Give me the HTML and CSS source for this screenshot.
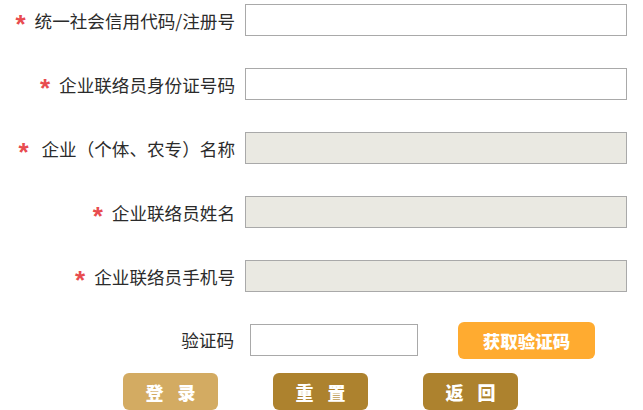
FILE: index.html
```html
<!DOCTYPE html>
<html lang="zh-CN">
<head>
<meta charset="utf-8">
<title>企业登录</title>
<link rel="stylesheet" href="styles.css">
</head>
<body>
<form class="form">
  <div class="row">
    <label class="label"><span class="star">*</span>统一社会信用代码/注册号</label>
    <input class="field" type="text">
  </div>
  <div class="row">
    <label class="label"><span class="star">*</span>企业联络员身份证号码</label>
    <input class="field" type="text">
  </div>
  <div class="row">
    <label class="label"><span class="star">*</span>&nbsp;企业（个体、农专）名称</label>
    <input class="field field-disabled" type="text" disabled>
  </div>
  <div class="row">
    <label class="label"><span class="star">*</span>企业联络员姓名</label>
    <input class="field field-disabled" type="text" disabled>
  </div>
  <div class="row row-last">
    <label class="label"><span class="star">*</span>企业联络员手机号</label>
    <input class="field field-disabled" type="text" disabled>
  </div>
  <div class="row row-code">
    <label class="label label-code">验证码</label>
    <input class="field field-code" type="text">
    <button type="button" class="btn-code">获取验证码</button>
  </div>
  <div class="actions">
    <button type="button" class="btn btn-login">登 录</button>
    <button type="button" class="btn btn-dark">重 置</button>
    <button type="button" class="btn btn-dark">返 回</button>
  </div>
</form>
</body>
</html>
```
FILE: styles.css
```css
html, body {
  margin: 0;
  padding: 0;
  background: #fff;
}
body {
  font-family: "Noto Sans CJK SC", "Noto Sans", sans-serif;
  color: #2b2b2b;
  font-size: 17.6px;
}
.form {
  padding-top: 4px;
  display: flex;
  flex-direction: column;
}
.row {
  display: flex;
  align-items: center;
  height: 32px;
  margin-bottom: 32px;
}
.row-last {
  margin-bottom: 30px;
}
.label {
  width: 235px;
  text-align: right;
  white-space: nowrap;
  line-height: 32px;
}
.star {
  color: #e84c4f;
  font-weight: bold;
  font-family: "Liberation Sans", sans-serif;
  font-size: 26px;
  margin-right: 9px;
  position: relative;
  top: 5px;
}
.field {
  margin-left: 10px;
  width: 382px;
  height: 32px;
  box-sizing: border-box;
  border: 1px solid #a9a9a9;
  background: #fff;
  padding: 0 6px;
  font: inherit;
  outline: none;
}
.field-disabled {
  background: #eae9e2;
}
.row-code {
  margin-bottom: 0;
  height: 36px;
}
.label-code {
  width: 234px;
}
.field-code {
  margin-left: 16px;
  width: 168px;
}
.btn-code {
  margin-left: 40px;
  width: 137px;
  height: 37px;
  border: none;
  border-radius: 6px;
  background: #ffab30;
  color: #fff;
  font-family: "Noto Sans CJK SC", sans-serif;
  font-weight: 900;
  font-size: 17.5px;
  padding: 0;
}
.actions {
  display: flex;
  margin-top: 15px;
  padding-left: 123px;
  gap: 55px;
}
.btn {
  width: 95px;
  height: 37px;
  border: none;
  border-radius: 6px;
  color: #fff;
  font-family: "Noto Sans CJK SC", sans-serif;
  font-weight: 900;
  font-size: 18px;
  letter-spacing: 5px;
  padding: 0 0 0 5px;
}
.btn-login {
  background: #d3ab62;
}
.btn-dark {
  background: #ad822e;
}
```
